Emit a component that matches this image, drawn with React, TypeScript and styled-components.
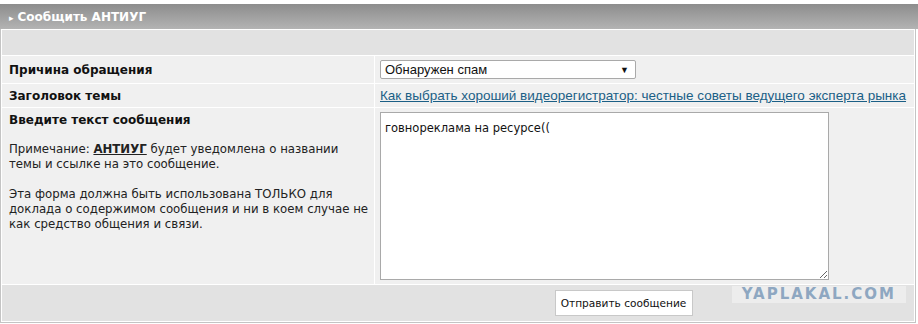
import styled, { createGlobalStyle } from 'styled-components'

const Global = createGlobalStyle`
    body {
        margin: 0;
        background: #ffffff;
        font-family: Tahoma, "DejaVu Sans", sans-serif;
    }
`

const Page = styled.div`
    position: relative;
    width: 918px;
    padding-top: 4px;
`

const Header = styled.div`
    height: 25px;
    display: flex;
    align-items: center;
    gap: 4px;
    padding-left: 9px;
    background: linear-gradient(#8d8d8d, #b3b3b3);
    color: #ffffff;
    font-family: "DejaVu Sans", sans-serif;
    font-weight: bold;
    font-size: 12px;
`

const Arrow = styled.span`
    font-size: 9px;
    font-weight: normal;
    margin-top: 3px;
`

const Table = styled.div`
    display: grid;
    grid-template-columns: 372px 1fr;
    gap: 1px;
    padding: 1px;
    background: #ffffff;
    border: 1px solid #c4c4c4;
    border-top: none;
    margin-right: 2px;
`

const Spacer = styled.div`
    grid-column: 1 / -1;
    height: 25px;
    background: #e2e2e2;
`

const Label = styled.div<{ $tall?: boolean }>`
    background: #f0f0f0;
    padding: ${(p) => (p.$tall ? '5px 3px 4px 7px' : '0 3px 0 7px')};
    display: flex;
    flex-direction: column;
    justify-content: ${(p) => (p.$tall ? 'flex-start' : 'center')};
    font-family: "DejaVu Sans", sans-serif;
    font-size: 12px;
    color: #111111;
`

const Title = styled.b`
    font-size: 12px;
`

const Note = styled.p`
    margin: 15px 0 0;
    font-size: 11.75px;
    line-height: 15px;
    color: #222222;

    & + & {
        margin-top: 15px;
    }
`

const Author = styled.strong`
    text-decoration: underline;
`

const Field = styled.div<{ $h: number }>`
    background: #f0f0f0;
    min-height: ${(p) => p.$h}px;
    padding: 0 5px;
    display: flex;
    align-items: center;
`

const TextCell = styled.div`
    background: #f0f0f0;
    padding: 4px 5px 4px;
`

const Select = styled.div`
    width: 256px;
    height: 19px;
    box-sizing: border-box;
    border: 1px solid #a9a9a9;
    border-radius: 2px;
    background: #ffffff;
    display: flex;
    align-items: center;
    justify-content: space-between;
    padding: 0 6px 0 4px;
    font-family: "Liberation Sans", Arial, sans-serif;
    font-size: 13px;
    color: #111111;
`

const Caret = styled.span`
    font-size: 9px;
`

const Link = styled.a`
    font-family: "Liberation Sans", Arial, sans-serif;
    font-size: 13.5px;
    color: #1b5f86;
    text-decoration: underline;
`

const TextArea = styled.textarea`
    display: block;
    width: 449px;
    height: 168px;
    box-sizing: border-box;
    border: 1px solid #a9a9a9;
    padding: 8px 4px;
    font-family: "DejaVu Sans", sans-serif;
    font-size: 11.5px;
    color: #111111;
    background: #ffffff;
    outline: none;
`

const Footer = styled.div`
    grid-column: 1 / -1;
    height: 36px;
    background: #e2e2e2;
    display: flex;
    align-items: center;
    justify-content: center;
    padding-left: 331px;
`

const Button = styled.button`
    height: 26px;
    width: 138px;
    padding: 0;
    background: #ffffff;
    border: 1px solid #c8c8c8;
    font-family: "DejaVu Sans", sans-serif;
    font-size: 10.6px;
    color: #111111;
`

const Watermark = styled.div`
    position: absolute;
    right: 12px;
    top: 286px;
    padding: 0 10px;
    height: 17px;
    line-height: 17px;
    background: rgba(240, 240, 240, 0.8);
    color: #8ea7c1;
    font-family: "DejaVu Sans", sans-serif;
    font-weight: bold;
    font-size: 15px;
    letter-spacing: 2px;
`

export default function App() {
    return (
        <Page>
            <Global />
            <Header>
                <Arrow>▸</Arrow>
                Сообщить АНТИУГ
            </Header>
            <Table>
                <Spacer />
                <Label><Title>Причина обращения</Title></Label>
                <Field $h={27}>
                    <Select>
                        Обнаружен спам
                        <Caret>▼</Caret>
                    </Select>
                </Field>
                <Label><Title>Заголовок темы</Title></Label>
                <Field $h={23}>
                    <Link href="#">Как выбрать хороший видеорегистратор: честные советы ведущего эксперта рынка</Link>
                </Field>
                <Label $tall>
                    <Title>Введите текст сообщения</Title>
                    <Note>
                        Примечание: <Author>АНТИУГ</Author> будет уведомлена о названии темы и ссылке на это сообщение.
                    </Note>
                    <Note>
                        Эта форма должна быть использована ТОЛЬКО для доклада о содержимом сообщения и ни в коем случае не как средство общения и связи.
                    </Note>
                </Label>
                <TextCell>
                    <TextArea defaultValue="говнореклама на ресурсе((" />
                </TextCell>
                <Footer>
                    <Button>Отправить сообщение</Button>
                </Footer>
            </Table>
            <Watermark>YAPLAKAL.COM</Watermark>
        </Page>
    )
}
